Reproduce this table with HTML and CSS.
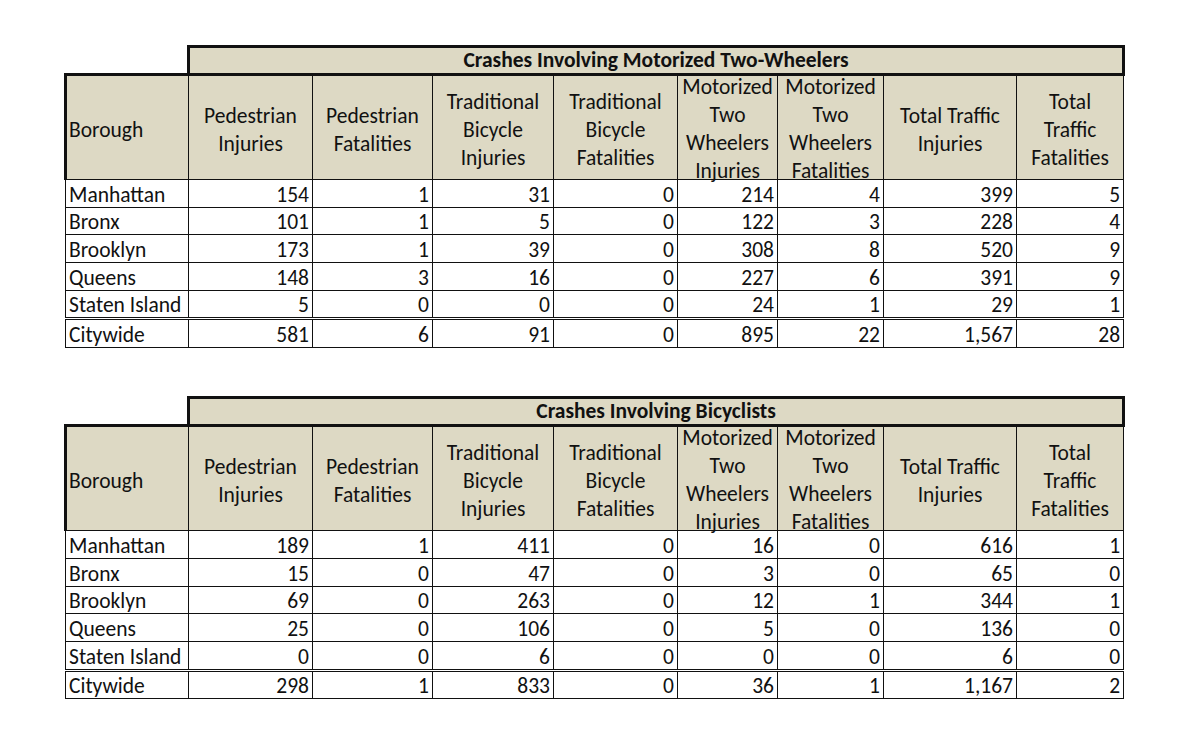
FILE: index.html
```html
<!DOCTYPE html>
<html>
<head>
<meta charset="utf-8">
<link rel="stylesheet" href="styles.css">
</head>
<body>
<div class="page">
<table class="crash">
  <colgroup>
    <col class="c-borough"><col class="c1"><col class="c2"><col class="c3"><col class="c4"><col class="c5"><col class="c6"><col class="c7"><col class="c8">
  </colgroup>
  <tr class="title-row"><td class="blank"></td><th colspan="8" class="title">Crashes Involving Motorized Two-Wheelers</th></tr>
  <tr class="head">
    <th class="borough-h">Borough</th>
    <th>Pedestrian<br>Injuries</th>
    <th>Pedestrian<br>Fatalities</th>
    <th>Traditional<br>Bicycle<br>Injuries</th>
    <th>Traditional<br>Bicycle<br>Fatalities</th>
    <th class="tall"><div class="stack">Motorized<br>Two<br>Wheelers<br>Injuries</div></th>
    <th class="tall"><div class="stack">Motorized<br>Two<br>Wheelers<br>Fatalities</div></th>
    <th>Total Traffic<br>Injuries</th>
    <th>Total<br>Traffic<br>Fatalities</th>
  </tr>
  <tr><td class="name">Manhattan</td><td>154</td><td>1</td><td>31</td><td>0</td><td>214</td><td>4</td><td>399</td><td>5</td></tr>
  <tr><td class="name">Bronx</td><td>101</td><td>1</td><td>5</td><td>0</td><td>122</td><td>3</td><td>228</td><td>4</td></tr>
  <tr><td class="name">Brooklyn</td><td>173</td><td>1</td><td>39</td><td>0</td><td>308</td><td>8</td><td>520</td><td>9</td></tr>
  <tr><td class="name">Queens</td><td>148</td><td>3</td><td>16</td><td>0</td><td>227</td><td>6</td><td>391</td><td>9</td></tr>
  <tr><td class="name">Staten Island</td><td>5</td><td>0</td><td>0</td><td>0</td><td>24</td><td>1</td><td>29</td><td>1</td></tr>
  <tr class="total"><td class="name">Citywide</td><td>581</td><td>6</td><td>91</td><td>0</td><td>895</td><td>22</td><td>1,567</td><td>28</td></tr>
</table>

<table class="crash">
  <colgroup>
    <col class="c-borough"><col class="c1"><col class="c2"><col class="c3"><col class="c4"><col class="c5"><col class="c6"><col class="c7"><col class="c8">
  </colgroup>
  <tr class="title-row"><td class="blank"></td><th colspan="8" class="title">Crashes Involving Bicyclists</th></tr>
  <tr class="head">
    <th class="borough-h">Borough</th>
    <th>Pedestrian<br>Injuries</th>
    <th>Pedestrian<br>Fatalities</th>
    <th>Traditional<br>Bicycle<br>Injuries</th>
    <th>Traditional<br>Bicycle<br>Fatalities</th>
    <th class="tall"><div class="stack">Motorized<br>Two<br>Wheelers<br>Injuries</div></th>
    <th class="tall"><div class="stack">Motorized<br>Two<br>Wheelers<br>Fatalities</div></th>
    <th>Total Traffic<br>Injuries</th>
    <th>Total<br>Traffic<br>Fatalities</th>
  </tr>
  <tr><td class="name">Manhattan</td><td>189</td><td>1</td><td>411</td><td>0</td><td>16</td><td>0</td><td>616</td><td>1</td></tr>
  <tr><td class="name">Bronx</td><td>15</td><td>0</td><td>47</td><td>0</td><td>3</td><td>0</td><td>65</td><td>0</td></tr>
  <tr><td class="name">Brooklyn</td><td>69</td><td>0</td><td>263</td><td>0</td><td>12</td><td>1</td><td>344</td><td>1</td></tr>
  <tr><td class="name">Queens</td><td>25</td><td>0</td><td>106</td><td>0</td><td>5</td><td>0</td><td>136</td><td>0</td></tr>
  <tr><td class="name">Staten Island</td><td>0</td><td>0</td><td>6</td><td>0</td><td>0</td><td>0</td><td>6</td><td>0</td></tr>
  <tr class="total"><td class="name">Citywide</td><td>298</td><td>1</td><td>833</td><td>0</td><td>36</td><td>1</td><td>1,167</td><td>2</td></tr>
</table>
</div>
</body>
</html>
```

FILE: styles.css
```css
html, body {
  margin: 0;
  padding: 0;
  background: #ffffff;
}

.page {
  padding: 45px 0 0 64px;
  display: flex;
  flex-direction: column;
  gap: 48px;
  font-family: "Carlito", "Lato", "Liberation Sans", sans-serif;
  color: #111;
}

.crash {
  border-collapse: collapse;
  table-layout: fixed;
  width: 1058px;
  font-size: 21.5px;
}

.c-borough { width: 123px; }
.c1 { width: 124px; }
.c2 { width: 120px; }
.c3 { width: 121px; }
.c4 { width: 124px; }
.c5 { width: 100px; }
.c6 { width: 106px; }
.c7 { width: 133px; }
.c8 { width: 107px; }

.crash td,
.crash th {
  border: 1px solid #111;
  padding: 0 3px;
  white-space: nowrap;
}

.title-row td.blank {
  border: none;
}

.title-row th.title {
  height: 24px;
  border: 3px solid #111;
  background: #ddd9c4;
  font-weight: bold;
  text-align: center;
  vertical-align: bottom;
  line-height: 25px;
  padding: 0;
}

.head th {
  height: 99px;
  background: #ddd9c4;
  font-weight: normal;
  text-align: center;
  vertical-align: middle;
  line-height: 28px;
  border-top: 3px solid #111;
  padding: 4px 1px 0;
}

.head th.tall {
  padding-top: 0;
  height: 103px;
}

.head th.borough-h {
  text-align: left;
  border-left: 3px solid #111;
  padding-left: 2px;
}

.stack {
  margin: -4px 0 -6px;
}

.crash tr td {
  height: 26.7px;
  text-align: right;
  vertical-align: bottom;
  line-height: 24px;
}

.crash tr td.name {
  text-align: left;
}

.crash tr.title-row td.blank {
  height: auto;
}

.crash tr.total td {
  border-top: 3px double #111;
}
```
